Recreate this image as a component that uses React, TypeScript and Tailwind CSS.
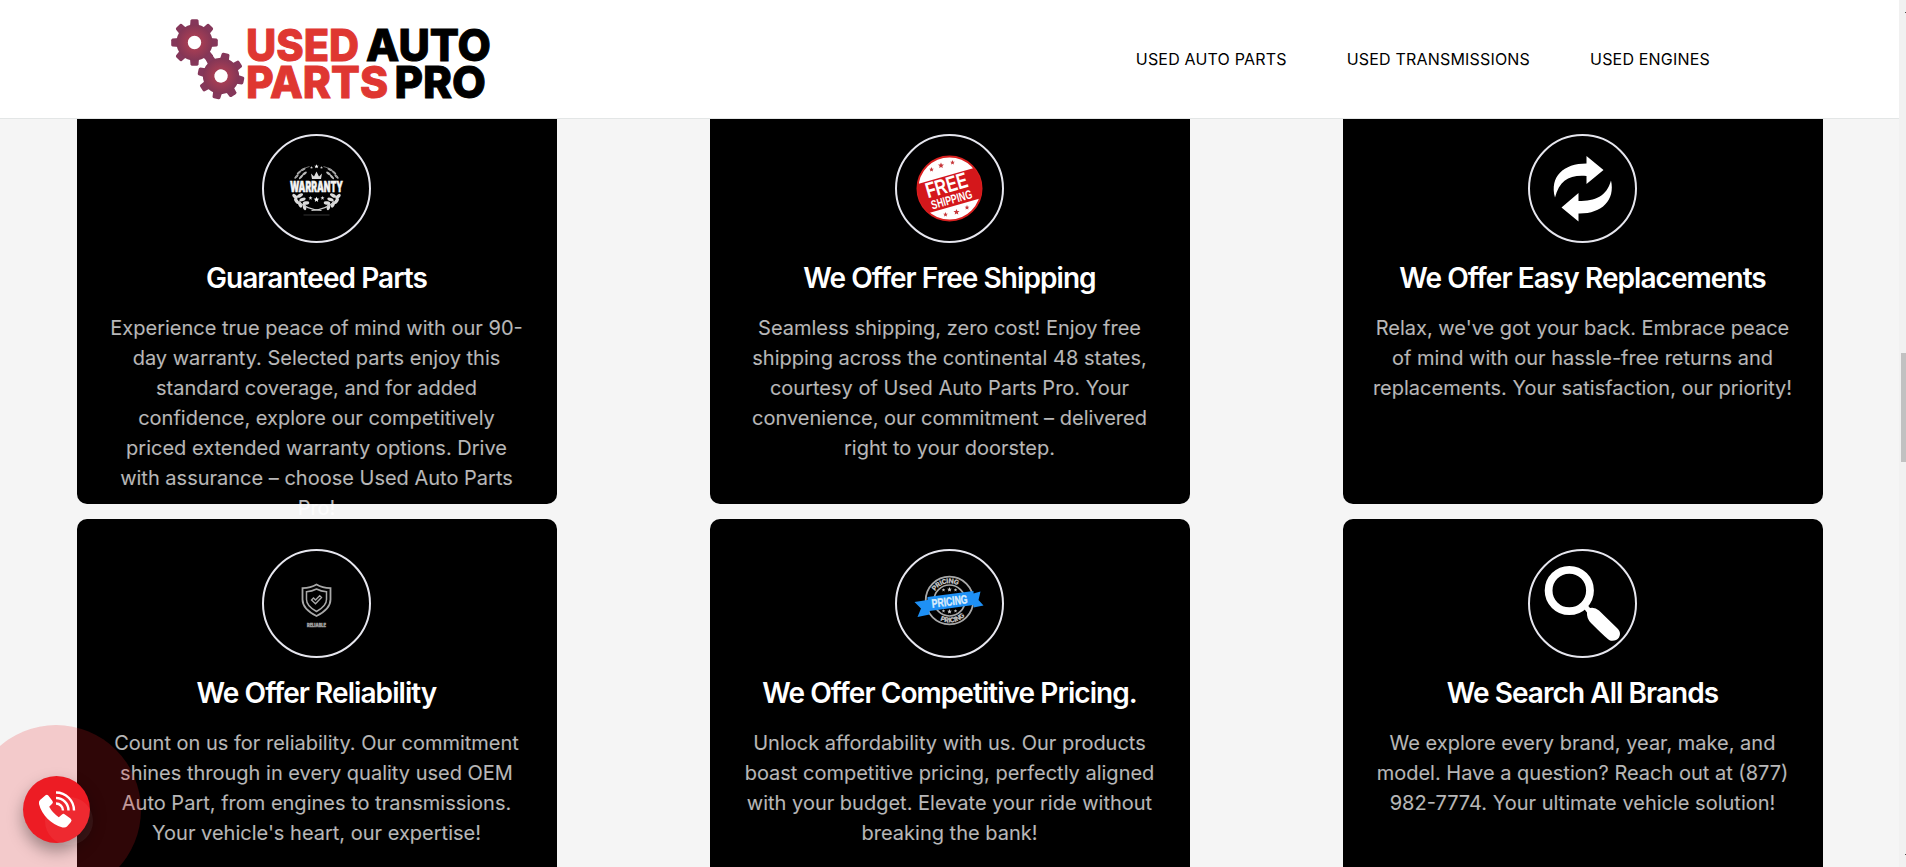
import React from "react";

const gearTeeth = [0, 45, 90, 135, 180, 225, 270, 315];

function Gear({ cx, cy, turn }: { cx: number; cy: number; turn: number }) {
  return (
    <g transform={`translate(${cx} ${cy}) rotate(${turn})`}>
      {gearTeeth.map((a) => (
        <path key={a} transform={`rotate(${a})`} d="M-4.6 -15 L-4 -22 Q-3.6 -23.3 -2.2 -23.3 L2.2 -23.3 Q3.6 -23.3 4 -22 L4.6 -15 Z" fill="#85375a" />
      ))}
      <circle r="12.4" fill="none" stroke="url(#gear)" strokeWidth="11.4" />
    </g>
  );
}

function Logo() {
  return (
    <svg className="block h-[118px] w-[330px]" viewBox="165 0 330 118">
      <defs>
        <radialGradient id="gear" gradientUnits="userSpaceOnUse" cx="0" cy="0" r="18">
          <stop offset="0.38" stopColor="#a53d54" />
          <stop offset="1" stopColor="#833656" />
        </radialGradient>
      </defs>
      <Gear cx={194.5} cy={42.5} turn={0} />
      <Gear cx={221} cy={76} turn={12} />
      <g fontFamily="Inter, sans-serif" fontWeight="800" fontSize="44.5" strokeWidth="1">
        <text x="246" y="61" textLength="113" lengthAdjust="spacingAndGlyphs" fill="#df3731" stroke="#df3731">USED</text>
        <text x="366" y="61" textLength="125" lengthAdjust="spacingAndGlyphs" fill="#000" stroke="#000">AUTO</text>
        <text x="246" y="98" textLength="142" lengthAdjust="spacingAndGlyphs" fill="#df3731" stroke="#df3731">PARTS</text>
        <text x="394.5" y="98" textLength="91.5" lengthAdjust="spacingAndGlyphs" fill="#000" stroke="#000">PRO</text>
      </g>
    </svg>
  );
}

function Star({ x, y, s, fill }: { x: number; y: number; s: number; fill: string }) {
  return (
    <path transform={`translate(${x} ${y}) scale(${s})`} fill={fill} d="M0 -1 L.29 -.35 L1 -.3 L.45 .15 L.6 .85 L0 .47 L-.6 .85 L-.45 .15 L-1 -.3 L-.29 -.35 Z" />
  );
}

const leaves = [
  [-21.5, 10, -25], [-20, 14.5, -15], [-16.5, 18, -5], [-12, 20.5, 10],
  [-16.5, 9, -100], [-14, 13, -90], [-10.5, 16.5, -80],
];
const upperLeaves = [[-20, -10, 35], [-17.5, -14, 40], [-13.5, -17, 55], [-15.5, -9.5, 35], [-12, -13, 45]];

function WarrantyIcon() {
  return (
    <g transform="translate(0 -2)">
      {[1, -1].map((m) => (
        <g key={m} transform={`scale(${m} 1)`} fill="#dcdcdc">
          {leaves.map(([x, y, r], i) => (
            <ellipse key={i} cx={x} cy={y} rx="3.3" ry="1.7" transform={`rotate(${r + 70} ${x} ${y})`} />
          ))}
          {upperLeaves.map(([x, y, r], i) => (
            <ellipse key={i} cx={x} cy={y} rx="2.8" ry="1.1" fill="#bbb" transform={`rotate(${r - 80} ${x} ${y})`} />
          ))}
          <path d="M-18 15 Q-10 23 5 24" fill="none" stroke="#ccc" strokeWidth="1.2" />
          <path d="M-21 -8 Q-17 -18 -7 -20" fill="none" stroke="#888" strokeWidth="0.8" />
        </g>
      ))}
      <Star x={0} y={-20} s={2.2} fill="#fff" />
      <Star x={-5} y={-19} s={1.4} fill="#ccc" />
      <Star x={5} y={-19} s={1.4} fill="#ccc" />
      <path d="M-4.5 -7.5 L-5.5 -13 L-2.5 -10 L0 -15 L2.5 -10 L5.5 -13 L4.5 -7.5 Z" fill="#ddd" />
      <text x="-26.5" y="5.3" textLength="53" lengthAdjust="spacingAndGlyphs" fontFamily="Inter, sans-serif" fontWeight="900" fontSize="14.5" fill="#f4f4f4" stroke="#f4f4f4" strokeWidth="0.5">WARRANTY</text>
      <Star x={-6} y={11.5} s={2} fill="#ddd" />
      <Star x={0} y={13} s={2.8} fill="#fff" />
      <Star x={6} y={11.5} s={2} fill="#ddd" />
      <path d="M-13 28.5 H13" stroke="#333" strokeWidth="1" />
    </g>
  );
}

function ShippingIcon() {
  return (
    <g>
      <circle r="32" fill="#fff" stroke="#d9201f" strokeWidth="2" />
      <g transform="rotate(-16)">
        <path d="M-29.2 -13 H29.2 A32 32 0 0 1 26.5 18 H-26.5 A32 32 0 0 1 -29.2 -13 Z" fill="#d4171b" />
        <text x="-23.5" y="3.5" textLength="43" lengthAdjust="spacingAndGlyphs" fontFamily="Liberation Sans, sans-serif" fontWeight="700" fontSize="22" fill="#fff">FREE</text>
        <text x="-22" y="15.5" textLength="42" lengthAdjust="spacingAndGlyphs" fontFamily="Liberation Sans, sans-serif" fontWeight="700" fontSize="12.5" fill="#fff">SHIPPING</text>
      </g>
      <Star x={-18} y={-19} s={2.4} fill="#c7373a" />
      <Star x={-8.5} y={-23} s={3} fill="#c7373a" />
      <Star x={3} y={-26} s={2.4} fill="#c7373a" />
      <Star x={-4} y={26} s={2.4} fill="#c7373a" />
      <Star x={7} y={23.5} s={3} fill="#c7373a" />
      <Star x={17.5} y={19} s={2.4} fill="#c7373a" />
    </g>
  );
}

function ReplaceIcon() {
  return (
    <g fill="#fff">
      <path d="M4 -32.5 L21 -18.5 L4 -4.5 V-12.5 C-13 -14 -23 -8 -27.5 9 C-33 -12 -19 -25 4 -25 Z" />
      <path d="M-4 33 L-21 19 L-4 4.5 V12.5 C13 12.5 24 8 28.5 -8 C33 12 19 25.5 -4 25 Z" />
    </g>
  );
}

function ReliableIcon() {
  return (
    <g transform="translate(0 -4)" fill="none" stroke="#a9a9a9" strokeWidth="1.8">
      <path d="M0 -15 C-5 -12 -9 -11.5 -14 -11.3 V0 C-14 8 -8 12.5 0 16.5 C8 12.5 14 8 14 0 V-11.3 C9 -11.5 5 -12 0 -15 Z" />
      <path d="M0 -10.5 C-4 -8.5 -7 -8 -10 -7.7 V0 C-10 5.5 -5.5 9 0 12 C5.5 9 10 5.5 10 0 V-7.7 C7 -8 4 -8.5 0 -10.5 Z" strokeWidth="1.5" />
      <path d="M-5 0.5 L-3 -1.5 L-1 .5 L3.2 -3.8 L5 -2 L-1 4.2 Z" strokeWidth="1.4" />
      <text x="-9.5" y="27" textLength="19" lengthAdjust="spacingAndGlyphs" fontFamily="Inter, sans-serif" fontWeight="900" fontSize="4.5" fill="#aaa" stroke="#999" strokeWidth="0.4">RELIABLE</text>
    </g>
  );
}

function PricingIcon() {
  return (
    <g transform="translate(0 -3)">
      <circle r="23.8" fill="none" stroke="#a9a9a9" strokeWidth="1.8" />
      <circle r="15.5" fill="none" stroke="#a9a9a9" strokeWidth="1.7" />
      <defs>
        <path id="arcTop" d="M-17.2 0 A17.2 17.2 0 0 1 17.2 0" />
        <path id="arcBottom" d="M-22 0 A22 22 0 0 0 22 0" />
      </defs>
      <g fontFamily="Inter, sans-serif" fontWeight="900" fontSize="7" fill="#bdbdbd" textAnchor="middle">
        <text transform="rotate(-14)"><textPath href="#arcTop" startOffset="50%" textLength="26">PRICING</textPath></text>
        <text transform="rotate(-10)"><textPath href="#arcBottom" startOffset="50%" textLength="27">PRICING</textPath></text>
      </g>
      {[-1, 1].map((m) => (
        <g key={m}>
          <Star x={-6} y={m * 10.5} s={1.8} fill="#bbb" />
          <Star x={0} y={m * 11} s={2.4} fill="#ccc" />
          <Star x={6} y={m * 10.5} s={1.8} fill="#bbb" />
        </g>
      ))}
      <path d="M-35 1.5 L-22 -.5 V-3.5 L24 -9.5 V-7 L31 -9 L29 -.5 L34 5 L24 7 V4.5 L-20 10.5 V14 L-32 16.5 L-28.5 8 Z" fill="#1e90f5" />
      <text transform="rotate(-7.5)" x="-18" y="5" textLength="36" lengthAdjust="spacingAndGlyphs" fontFamily="Liberation Sans, sans-serif" fontWeight="700" fontSize="12" fill="#d9ecfc" stroke="#d9ecfc" strokeWidth="0.4">PRICING</text>
    </g>
  );
}

function SearchIcon() {
  return (
    <g>
      <circle cx="-13.2" cy="-13" r="20.7" fill="none" stroke="#fff" strokeWidth="7.8" />
      <path d="M1 4.5 L4.5 1 L7.5 4.5 Q12.5 3.5 16.5 7 L35.5 25.5 Q39 29.5 36.5 34 Q33.5 38 27.5 37 Q25.5 36.5 8.5 19.5 Q4 15 4.5 9 Z" fill="#fff" />
    </g>
  );
}

type Feature = { title: string; lines: string[]; icon: React.ReactNode };

const features: Feature[] = [
  {
    title: "Guaranteed Parts",
    icon: <WarrantyIcon />,
    lines: ["Experience true peace of mind with our 90-", "day warranty. Selected parts enjoy this", "standard coverage, and for added", "confidence, explore our competitively", "priced extended warranty options. Drive", "with assurance – choose Used Auto Parts", "Pro!"],
  },
  {
    title: "We Offer Free Shipping",
    icon: <ShippingIcon />,
    lines: ["Seamless shipping, zero cost! Enjoy free", "shipping across the continental 48 states,", "courtesy of Used Auto Parts Pro. Your", "convenience, our commitment – delivered", "right to your doorstep."],
  },
  {
    title: "We Offer Easy Replacements",
    icon: <ReplaceIcon />,
    lines: ["Relax, we've got your back. Embrace peace", "of mind with our hassle-free returns and", "replacements. Your satisfaction, our priority!"],
  },
  {
    title: "We Offer Reliability",
    icon: <ReliableIcon />,
    lines: ["Count on us for reliability. Our commitment", "shines through in every quality used OEM", "Auto Part, from engines to transmissions.", "Your vehicle's heart, our expertise!"],
  },
  {
    title: "We Offer Competitive Pricing.",
    icon: <PricingIcon />,
    lines: ["Unlock affordability with us. Our products", "boast competitive pricing, perfectly aligned", "with your budget. Elevate your ride without", "breaking the bank!"],
  },
  {
    title: "We Search All Brands",
    icon: <SearchIcon />,
    lines: ["We explore every brand, year, make, and", "model. Have a question? Reach out at (877)", "982-7774. Your ultimate vehicle solution!"],
  },
];

function Card({ title, lines, icon }: Feature) {
  return (
    <article className="flex h-[400px] w-[480px] flex-col items-center rounded-[10px] bg-black pt-[30px] pr-px text-center">
      <div className="h-[109px] w-[109px] shrink-0 rounded-full border-2 border-[#e6e6ee]">
        <svg className="block h-[105px] w-[105px]" viewBox="-52.5 -52.5 105 105">{icon}</svg>
      </div>
      <h3 className="mt-[17px] text-[28px] leading-[36px] font-semibold tracking-[-0.94px] text-white">{title}</h3>
      <p className="mt-[17px] text-[20px] leading-[30px] text-white/72">
        {lines.map((line) => (
          <span key={line} className="block whitespace-nowrap">{line}</span>
        ))}
      </p>
    </article>
  );
}

function CallButton() {
  return (
    <a className="absolute -left-[29px] top-[725px] flex h-[170px] w-[170px] items-center justify-center rounded-full bg-[#ed1c24]/20" aria-label="Call">
      <span className="relative mb-[1px] flex h-[67px] w-[67px] items-center justify-center rounded-full bg-[#ed1c24] shadow-[0_8px_16px_rgba(0,0,0,0.35)]">
        <svg className="h-[40px] w-[40px]" viewBox="0 0 40 40">
          <path d="M4 10 L9.5 5.2 Q11 4 12.3 5.5 L16.5 11 Q17.5 12.5 16.2 13.8 L13.2 16.8 Q16.5 23 22.8 27.2 L26 24.5 Q27.4 23.3 28.9 24.4 L34.5 28.6 Q36.5 30.2 34.9 32 L31 36.5 Q29.5 38 26.5 37.4 C15 34 6 25.5 3 14 Q2.5 11.5 4 10 Z" fill="#fff" />
          <g fill="none" stroke="#fff" strokeWidth="2.4">
            <path d="M20 2.5 A18 18 0 0 1 38 20.5" />
            <path d="M20 8 A12.5 12.5 0 0 1 32.5 20.5" />
            <path d="M20 13.5 A7 7 0 0 1 27 20.5" />
          </g>
        </svg>
        <span className="absolute left-[22px] top-[21px] h-[48px] w-[48px] rounded-full bg-white/6" />
      </span>
    </a>
  );
}

export default function App() {
  return (
    <div className="relative flex h-[867px] w-full overflow-hidden bg-[#f5f5f5] font-['Inter',sans-serif]">
      <div className="flex min-w-0 flex-1 flex-col">
        <header className="z-10 flex h-[119px] shrink-0 items-center justify-between border-b border-[#e3e6e6] bg-white pr-[189px] pl-[165px]">
          <Logo />
          <nav className="flex gap-[60px] text-[16px] tracking-[0.19px] text-black">
            <a>USED AUTO PARTS</a>
            <a>USED TRANSMISSIONS</a>
            <a>USED ENGINES</a>
          </nav>
        </header>
        <main className="-mt-[15px] grid grid-cols-[634px_632px_634px] justify-items-center gap-y-[15px]">
          {features.map((f) => (
            <Card key={f.title} {...f} />
          ))}
        </main>
      </div>
      <aside className="z-10 flex w-[7px] shrink-0 flex-col items-end justify-between bg-[#f1f1f1]">
        <span className="mt-[12px] h-px w-px bg-[#505050]" />
        <span className="mb-[12px] h-px w-px bg-[#505050]" />
      </aside>
      <span className="absolute right-0 top-[353px] z-20 h-[109px] w-[5px] bg-[#c1c1c1]" />
      <CallButton />
    </div>
  );
}
